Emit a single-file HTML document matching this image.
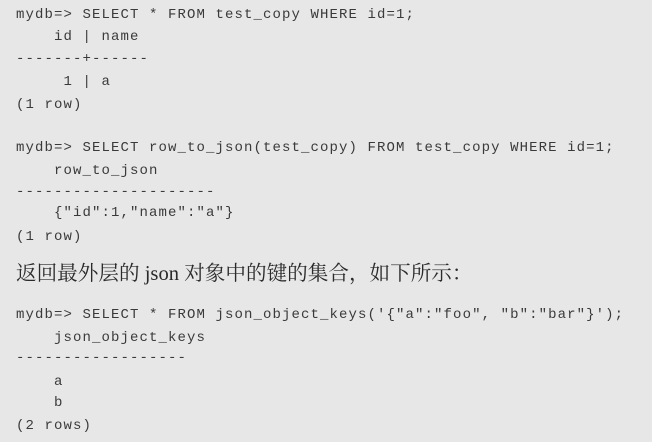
<!DOCTYPE html>
<html><head><meta charset="utf-8"><style>
html,body{margin:0;padding:0;}
body{width:652px;height:442px;background:#e7e7e7;position:relative;overflow:hidden;color:#3a3a3a;}
.l{position:absolute;left:16px;font-family:"Liberation Mono",monospace;font-size:14px;letter-spacing:1.1px;white-space:pre;line-height:22px;height:22px;}
.c{position:absolute;left:16px;top:261px;font-family:"Liberation Serif","Noto Serif CJK SC",serif;font-size:20.6px;line-height:26px;white-space:pre;color:#2a2a2a;}
</style></head><body>
<div class="l" style="top:4px">mydb=&gt; SELECT * FROM test_copy WHERE id=1;</div>
<div class="l" style="top:26px">    id | name</div>
<div class="l" style="top:48px">-------+------</div>
<div class="l" style="top:71px">     1 | a</div>
<div class="l" style="top:94px">(1 row)</div>
<div class="l" style="top:137px">mydb=&gt; SELECT row_to_json(test_copy) FROM test_copy WHERE id=1;</div>
<div class="l" style="top:160px">    row_to_json</div>
<div class="l" style="top:181px">---------------------</div>
<div class="l" style="top:202px">    {"id":1,"name":"a"}</div>
<div class="l" style="top:226px">(1 row)</div>
<div class="c">返回最外层的 json 对象中的键的集合，如下所示：</div>
<div class="l" style="top:304px">mydb=&gt; SELECT * FROM json_object_keys('{"a":"foo", "b":"bar"}');</div>
<div class="l" style="top:327px">    json_object_keys</div>
<div class="l" style="top:347px">------------------</div>
<div class="l" style="top:371px">    a</div>
<div class="l" style="top:392px">    b</div>
<div class="l" style="top:415px">(2 rows)</div>
</body></html>
